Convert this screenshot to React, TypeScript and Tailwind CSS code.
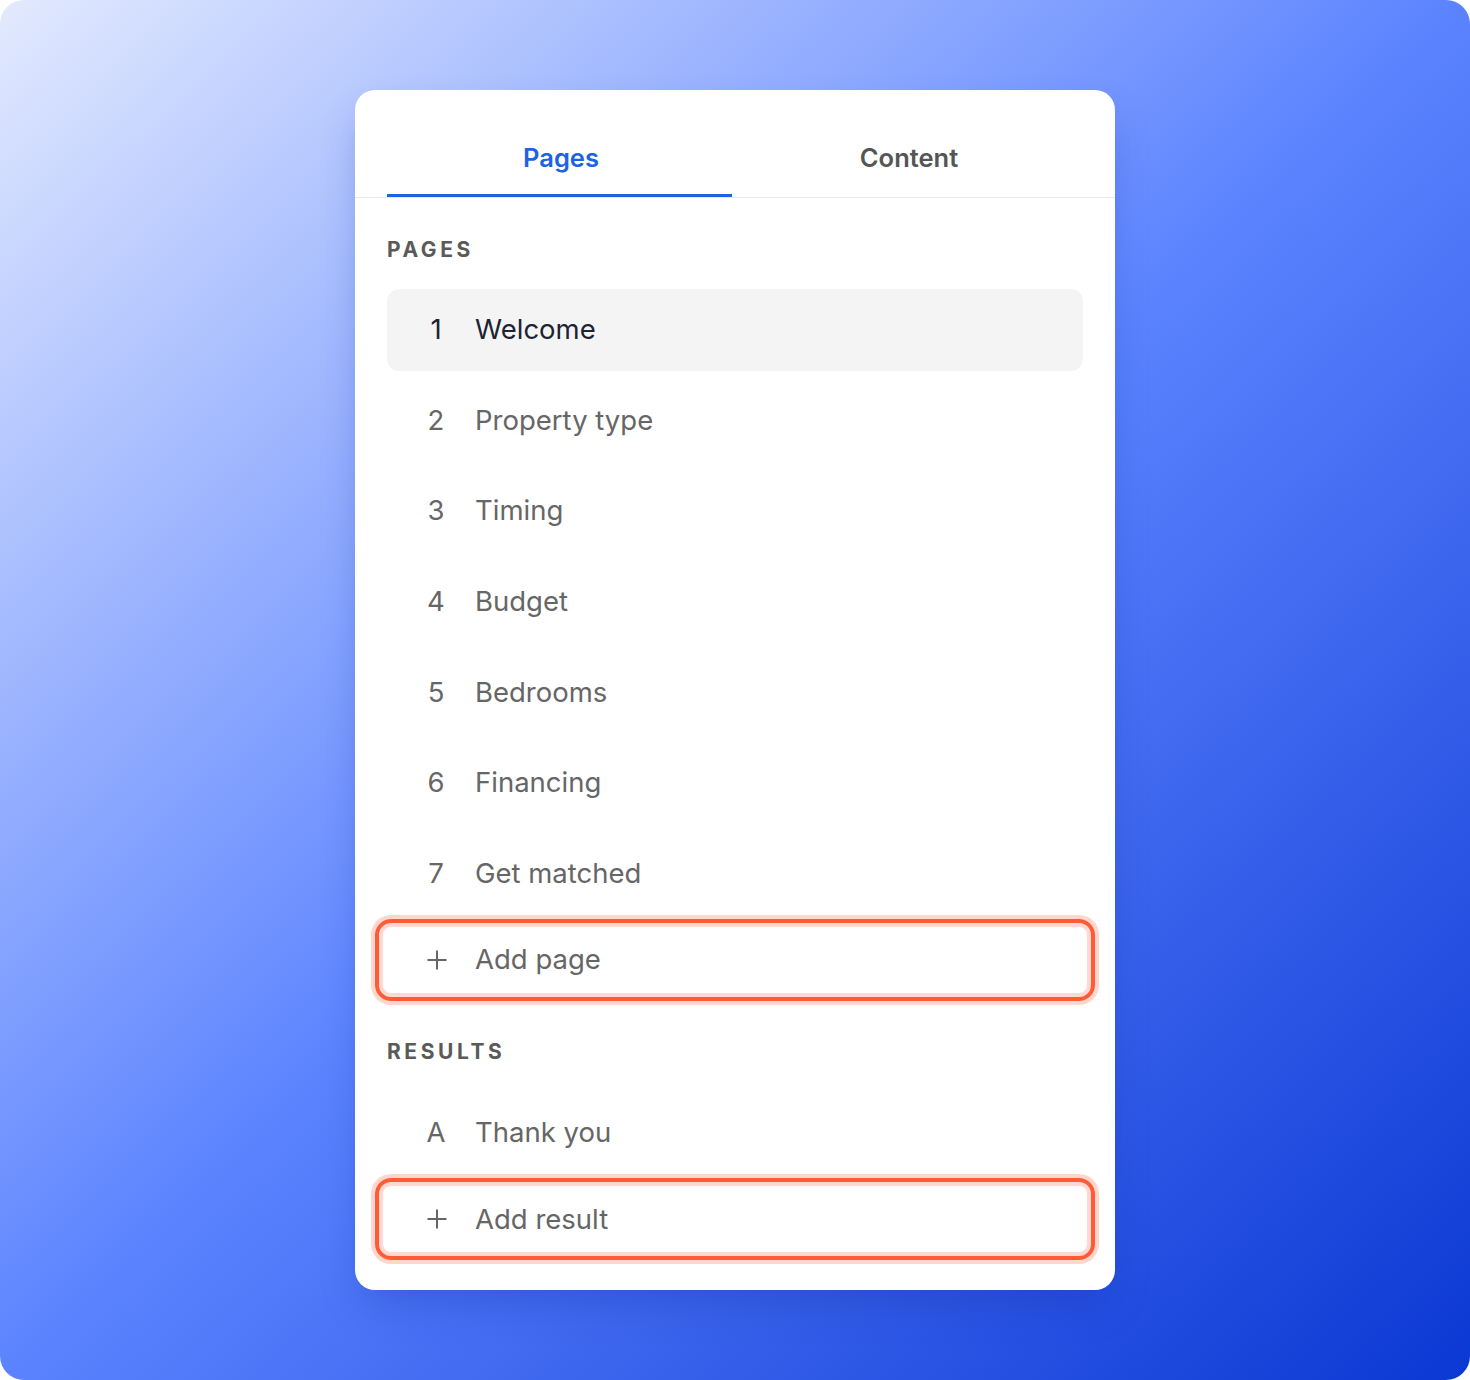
import { Plus } from "lucide-react";

const pages = [
  "Welcome",
  "Property type",
  "Timing",
  "Budget",
  "Bedrooms",
  "Financing",
  "Get matched",
];

function Row({
  marker,
  label,
  active = false,
}: {
  marker: React.ReactNode;
  label: string;
  active?: boolean;
}) {
  return (
    <div
      className={`flex h-[82px] items-center rounded-[12px] text-[27.5px] ${
        active ? "bg-[#f4f4f4] text-[#1c2433]" : "text-[#666666]"
      }`}
    >
      <span className="flex w-[88px] justify-center pl-[10px]">{marker}</span>
      <span>{label}</span>
    </div>
  );
}

function AddRow({ label }: { label: string }) {
  return (
    <div className="-mx-[12px] flex h-[82px] items-center rounded-[16px] border-4 border-[#ff5b37] text-[27.5px] text-[#666666] ring-4 ring-[#ffd6cc] inset-ring-4 inset-ring-[#ffd9d1]">
      <span className="flex w-[96px] justify-center pl-[20px]">
        <Plus className="h-[30px] w-[30px]" strokeWidth={1.6} />
      </span>
      <span>{label}</span>
    </div>
  );
}

function SectionLabel({ children }: { children: string }) {
  return (
    <div className="text-[21px] font-bold uppercase tracking-[0.17em] text-[#5a5a5a]">
      {children}
    </div>
  );
}

export default function App() {
  return (
    <div className="h-[1380px] w-[1470px] bg-white font-['Inter',sans-serif]">
      <div className="flex h-full w-full justify-center rounded-[24px] bg-[linear-gradient(to_bottom_right,#e3eafe_0%,#5b83ff_50%,#0b38d3_100%)] pt-[90px]">
        <div className="h-[1200px] w-[760px] rounded-[20px] bg-white shadow-[0_20px_40px_-10px_rgba(20,50,160,0.35)]">
          {/* tabs */}
          <div className="border-b border-[#e8e8e8] px-8">
            <div className="grid grid-cols-2">
              <div className="flex h-[107px] flex-col justify-end">
                <div className="pb-[17px] text-center text-[25.5px] font-semibold text-[#1d63e0]">
                  Pages
                </div>
                <div className="h-[3px] w-[345px] bg-[#1d63e0]" />
              </div>
              <div className="flex h-[107px] flex-col justify-end">
                <div className="pb-[20px] text-center text-[25.5px] font-semibold text-[#555555]">
                  Content
                </div>
              </div>
            </div>
          </div>

          <div className="px-8 pt-[36px]">
            <SectionLabel>Pages</SectionLabel>
            <div className="mt-[23px] flex flex-col gap-[8.7px]">
              {pages.map((p, i) => (
                <Row key={p} marker={i + 1} label={p} active={i === 0} />
              ))}
            </div>
            <div className="mt-[4px]">
              <AddRow label="Add page" />
            </div>

            <div className="mt-[35px]">
              <SectionLabel>Results</SectionLabel>
            </div>
            <div className="mt-[24px]">
              <Row marker="A" label="Thank you" />
            </div>
            <div className="mt-[5px]">
              <AddRow label="Add result" />
            </div>
          </div>
        </div>
      </div>
    </div>
  );
}
